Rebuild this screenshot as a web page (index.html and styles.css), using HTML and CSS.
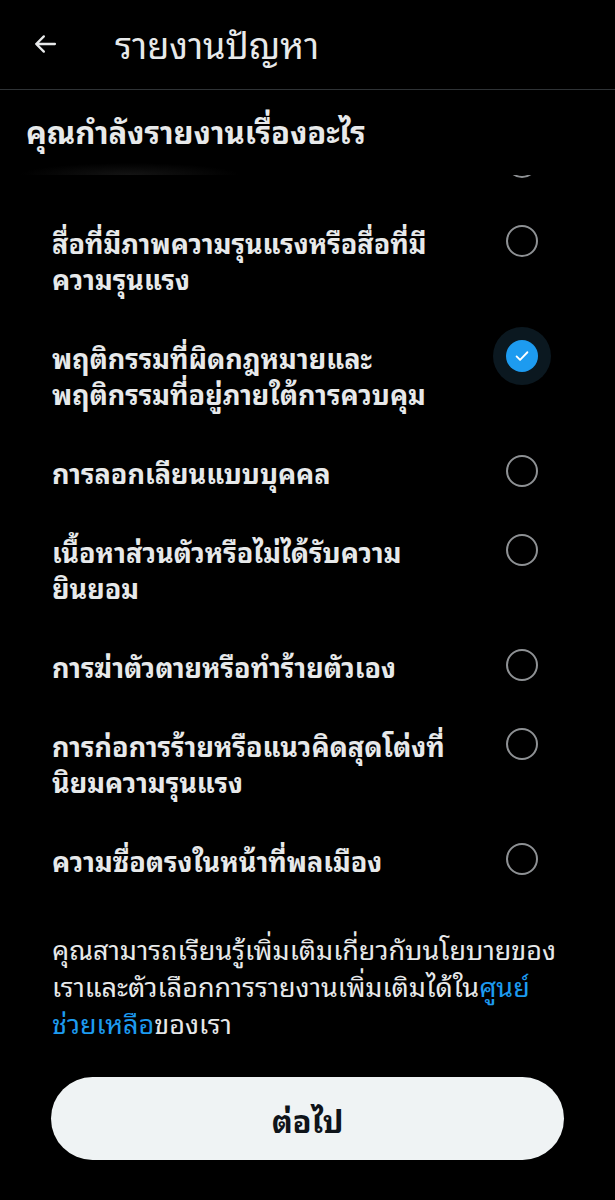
FILE: index.html
```html
<!DOCTYPE html>
<html lang="th">
<head>
    <meta charset="UTF-8">
    <meta name="viewport" content="width=device-width, initial-scale=1.0">
    <title>รายงานปัญหา</title>
    <link rel="stylesheet" href="styles.css">
</head>
<body>
    <header class="topbar">
        <button class="back-btn" type="button" aria-label="กลับ">
            <svg viewBox="0 0 24 24" width="28" height="28">
                <path d="M20.5 12H4.5M11 5.5L4.5 12l6.5 6.5" fill="none" stroke="#e7e9ea" stroke-width="2" stroke-linecap="round" stroke-linejoin="round"/>
            </svg>
        </button>
        <h1 class="topbar-title">รายงานปัญหา</h1>
    </header>

    <div class="section-head">
        <h2>คุณกำลังรายงานเรื่องอะไร</h2>
    </div>

    <div class="list-viewport">
        <ul class="options">
            <!-- ข้อก่อนหน้าที่เลื่อนขึ้นไปแล้ว เหลือให้เห็นแค่ขอบวงกลม -->
            <li class="option option-hidden">
                <span class="option-label"></span>
                <span class="radio"></span>
            </li>
            <li class="option">
                <span class="option-label">สื่อที่มีภาพความรุนแรงหรือสื่อที่มีความรุนแรง</span>
                <span class="radio"></span>
            </li>
            <li class="option">
                <span class="option-label">พฤติกรรมที่ผิดกฎหมายและพฤติกรรมที่อยู่ภายใต้การควบคุม</span>
                <span class="radio checked">
                    <svg viewBox="0 0 24 24" width="20" height="20">
                        <path d="M5.5 12.5l4.2 4.2L18.5 7.5" fill="none" stroke="#fff" stroke-width="2.2" stroke-linecap="round" stroke-linejoin="round"/>
                    </svg>
                </span>
            </li>
            <li class="option">
                <span class="option-label">การลอกเลียนแบบบุคคล</span>
                <span class="radio"></span>
            </li>
            <li class="option">
                <span class="option-label">เนื้อหาส่วนตัวหรือไม่ได้รับความยินยอม</span>
                <span class="radio"></span>
            </li>
            <li class="option">
                <span class="option-label">การฆ่าตัวตายหรือทำร้ายตัวเอง</span>
                <span class="radio"></span>
            </li>
            <li class="option">
                <span class="option-label">การก่อการร้ายหรือแนวคิดสุดโต่งที่นิยมความรุนแรง</span>
                <span class="radio"></span>
            </li>
            <li class="option">
                <span class="option-label">ความซื่อตรงในหน้าที่พลเมือง</span>
                <span class="radio"></span>
            </li>
        </ul>
    </div>

    <p class="note">คุณสามารถเรียนรู้เพิ่มเติมเกี่ยวกับนโยบายของเราและตัวเลือกการรายงานเพิ่มเติมได้ใน<a href="#">ศูนย์ช่วยเหลือ</a>ของเรา</p>

    <div class="actions">
        <button class="next-btn" type="button">ต่อไป</button>
    </div>
</body>
</html>
```

FILE: styles.css
```css
body {
    margin: 0;
    background: #000;
    color: #e7e9ea;
    font-family: "Noto Sans Thai Looped", "Loma", "Garuda", "Noto Sans Thai", "Noto Sans", sans-serif;
    width: 615px;
}
.topbar {
    display: flex;
    align-items: center;
    height: 90px;
    border-bottom: 1px solid #2f3336;
    box-sizing: border-box;
    padding-left: 31px;
}
.back-btn {
    background: none;
    border: none;
    padding: 0;
    width: 28px;
    height: 28px;
    margin: 0 56px 2px 0;
}
.topbar-title {
    margin: 0 0 4px;
    font-size: 36px;
    font-weight: 400;
    line-height: 44px;
}
.section-head {
    height: 85px;
    display: flex;
    align-items: center;
    padding: 0 26px;
    background:
        radial-gradient(ellipse 110px 12px at 130px 100%, #141414, transparent),
        #000;
}
.section-head h2 {
    margin: 0 0 6px;
    font-size: 31px;
    font-weight: 700;
    line-height: 40px;
}
.list-viewport {
    overflow: hidden;
}
.options {
    list-style: none;
    margin: -52px 0 0;
    padding: 0;
}
.option {
    display: flex;
    align-items: flex-start;
    justify-content: space-between;
    padding: 21.5px 77px 21.5px 52px;
    font-size: 27px;
    font-weight: 700;
    line-height: 36px;
}
.option-hidden {
    height: 36px;
}
.option-label {
    max-width: 410px;
}
.radio {
    flex: none;
    width: 32px;
    height: 32px;
    margin-top: 1px;
    border: 2.5px solid #8e9194;
    border-radius: 50%;
    box-sizing: border-box;
    display: flex;
    align-items: center;
    justify-content: center;
}
.radio.checked {
    border: none;
    background: #1d9bf0;
    box-shadow: 0 0 0 13px #0b1820;
}
.note {
    margin: 30px 0 0;
    padding: 0 50px 0 52px;
    font-size: 27px;
    line-height: 37px;
}
.note a {
    color: #1d9bf0;
    text-decoration: none;
}
.actions {
    padding: 37px 51px 40px;
}
.next-btn {
    width: 100%;
    height: 83px;
    border: none;
    border-radius: 42px;
    background: #eff3f4;
    color: #0f1419;
    font-family: inherit;
    font-size: 31px;
    font-weight: 700;
}
```
